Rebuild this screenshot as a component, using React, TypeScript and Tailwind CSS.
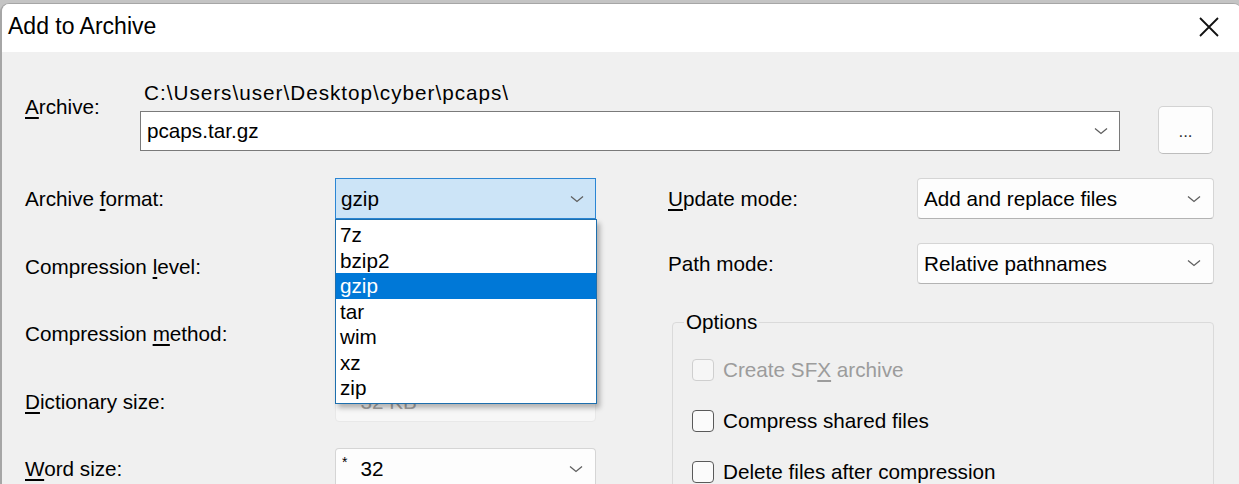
import { ReactNode } from "react";

const Chevron = ({ light }: { light?: boolean }) => (
  <svg width="14" height="8" viewBox="0 0 14 8" fill="none" className="shrink-0">
    <path d="M1 1.5 7 6.5 13 1.5" stroke={light ? "#c6c6c6" : "#5f5f5f"} strokeWidth="1.3" />
  </svg>
);

const Select = ({ value, disabled }: { value: ReactNode; disabled?: boolean }) => (
  <div
    className={`flex h-[41px] items-center justify-between rounded-[4px] border pl-[6px] pr-[12px] ${
      disabled
        ? "border-[#e8e8e8] bg-[#f7f7f7] text-[#a5a5a5]"
        : "border-[#d5d5d5] border-b-[#b3b3b3] bg-[#fdfdfd] text-black"
    }`}
  >
    <span className="truncate">{value}</span>
    <Chevron light={disabled} />
  </div>
);

const Star = ({ text }: { text: string }) => (
  <span className="flex items-start">
    <span className="text-[14px] leading-[18px]">*</span>
    <span className="ml-[13px]">{text}</span>
  </span>
);

const Check = ({ label, disabled }: { label: ReactNode; disabled?: boolean }) => (
  <div className="flex h-[51px] items-center">
    <span
      className={`h-[22px] w-[22px] rounded-[4px] border ${
        disabled ? "border-[#cfcfcf] bg-[#f6f6f6]" : "border-[#5a5a5a] bg-[#fbfbfb]"
      }`}
    />
    <span className={`ml-[9px] ${disabled ? "text-[#9c9c9c]" : "text-black"}`}>{label}</span>
  </div>
);

const formats = ["7z", "bzip2", "gzip", "tar", "wim", "xz", "zip"];

export default function App() {
  return (
    <div className="h-[484px] w-[1239px] overflow-hidden bg-[#c4c4c4] pt-[3px] font-['Liberation_Sans',Arial,sans-serif] text-[20.7px] text-black">
      <div className="h-[490px] w-[1242px] overflow-hidden rounded-t-[9px] border-l-2 border-t border-[#a6a6a6] bg-[#f0f0f0]">
        {/* title bar */}
        <div className="flex h-[48px] items-center justify-between bg-white pb-[3px] pl-[6px] pr-[20px]">
          <span className="text-[23px]">Add to Archive</span>
          <svg width="20" height="20" viewBox="0 0 20 20" className="mr-[3px]">
            <path d="M1 1 19 19M19 1 1 19" stroke="#111" strokeWidth="1.8" />
          </svg>
        </div>

        <div className="px-[23px] pt-[29px]">
          {/* archive path */}
          <div className="flex">
            <div className="w-[115px] pt-[14px] leading-[24px]">
              <u className="underline-offset-[3px]">A</u>rchive:
            </div>
            <div>
              <div className="pl-[4px] leading-[24px] tracking-[1px]">
                {"C:\\Users\\user\\Desktop\\cyber\\pcaps\\"}
              </div>
              <div className="mt-[6px] flex items-start">
                <div className="flex h-[40px] w-[980px] items-center justify-between border border-[#7a7a7a] bg-white pl-[6px] pr-[11px]">
                  <span>pcaps.tar.gz</span>
                  <Chevron />
                </div>
                <button className="-mt-[5px] ml-[38px] h-[48px] w-[55px] rounded-[5px] border border-[#d3d3d3] border-b-[#bdbdbd] bg-[#fdfdfd] pt-[4px] text-[17px] text-[#333]">
                  ...
                </button>
              </div>
            </div>
          </div>

          <div className="mt-[11px] flex">
            {/* left column */}
            <div className="w-[571px]">
              <div className="flex h-[67.5px] items-center">
                <div className="w-[310px]">
                  Archive <u className="underline-offset-[3px]">f</u>ormat:
                </div>
                <div className="relative w-[261px]">
                  <div className="flex h-[41px] items-center justify-between border border-[#2b86d4] bg-[#cce4f7] pl-[5px] pr-[11px]">
                    <span>gzip</span>
                    <Chevron />
                  </div>
                  <div className="absolute left-0 top-full z-10 w-[262px] border border-[#1d6fae] bg-white py-[2px] shadow-[3px_4px_5px_rgba(0,0,0,0.28)]">
                    {formats.map((f) => (
                      <div
                        key={f}
                        className={`h-[25.5px] pl-[4px] leading-[25.5px] ${
                          f === "gzip" ? "bg-[#0078d7] text-white" : ""
                        }`}
                      >
                        {f}
                      </div>
                    ))}
                  </div>
                </div>
              </div>
              <div className="flex h-[67.5px] items-center">
                <div className="w-[310px]">
                  Compression <u className="underline-offset-[3px]">l</u>evel:
                </div>
                <div className="w-[261px]">
                  <Select value="" />
                </div>
              </div>
              <div className="flex h-[67.5px] items-center">
                <div className="w-[310px]">
                  Compression <u className="underline-offset-[3px]">m</u>ethod:
                </div>
                <div className="w-[261px]">
                  <Select value="" />
                </div>
              </div>
              <div className="flex h-[67.5px] items-center">
                <div className="w-[310px]">
                  <u className="underline-offset-[3px]">D</u>ictionary size:
                </div>
                <div className="w-[261px]">
                  <Select value={<Star text="32 KB" />} disabled />
                </div>
              </div>
              <div className="flex h-[67.5px] items-center">
                <div className="w-[310px]">
                  <u className="underline-offset-[3px]">W</u>ord size:
                </div>
                <div className="w-[261px]">
                  <Select value={<Star text="32" />} />
                </div>
              </div>
            </div>

            {/* right column */}
            <div className="ml-[72px] w-[546px]">
              <div className="flex h-[67.5px] items-center">
                <div className="w-[249px]">
                  <u className="underline-offset-[3px]">U</u>pdate mode:
                </div>
                <div className="w-[297px]">
                  <Select value="Add and replace files" />
                </div>
              </div>
              <div className="-mt-[3px] flex h-[67.5px] items-center">
                <div className="w-[249px]">Path mode:</div>
                <div className="w-[297px]">
                  <Select value="Relative pathnames" />
                </div>
              </div>
              <fieldset className="ml-[4px] mt-[13px] rounded-[4px] border border-[#dadada] pb-[10px] pl-[19px] pt-[10px]">
                <legend className="-ml-[8px] px-[2px] leading-[24px]">Options</legend>
                <Check
                  disabled
                  label={
                    <>
                      Create SF<u className="underline-offset-[3px]">X</u> archive
                    </>
                  }
                />
                <Check label="Compress shared files" />
                <Check label="Delete files after compression" />
              </fieldset>
            </div>
          </div>
        </div>
      </div>
    </div>
  );
}
